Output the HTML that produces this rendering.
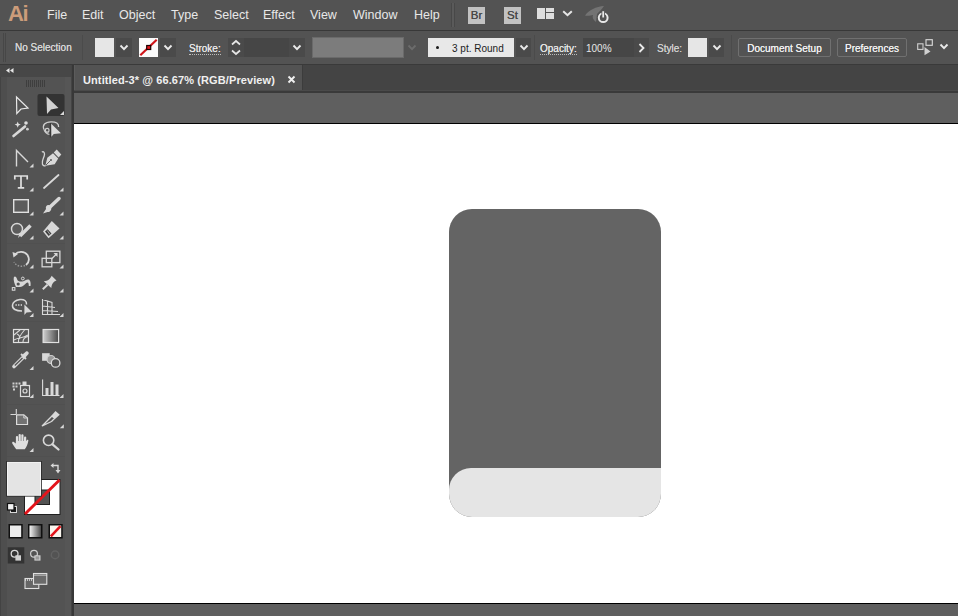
<!DOCTYPE html>
<html><head><meta charset="utf-8">
<style>
*{margin:0;padding:0;box-sizing:border-box}
html,body{width:958px;height:616px;overflow:hidden;background:#535353;font-family:"Liberation Sans",sans-serif;color:#e6e6e6}
.a{position:absolute}
.menu{font-size:12.5px;color:#e8e8e8;top:8px;white-space:nowrap}
.ctl{font-size:10px;color:#e6e6e6;white-space:nowrap}
.dd{background:#4a4a4a}
.b{text-shadow:0 0 0.4px currentColor}
.chev{position:absolute;left:50%;top:50%;width:6px;height:6px;border-right:1.6px solid #e0e0e0;border-bottom:1.6px solid #e0e0e0;transform:translate(-50%,-75%) rotate(45deg)}
.lbl{border-bottom:1px dotted #bdbdbd;line-height:11px}
.btn{border:1px solid #707070;border-radius:2px;background:#535353;font-size:10px;text-align:center;line-height:19px;color:#f0f0f0}
.tri{position:absolute;width:0;height:0;border-left:4px solid transparent;border-bottom:4px solid #d8d8d8}
</style></head><body>
<!-- MENU BAR -->
<div class="a" style="left:0;top:0;width:958px;height:30px;background:#535353"></div>
<div class="a" style="left:0;top:30px;width:958px;height:1px;background:#383838"></div>
<div class="a" style="left:8px;top:2px;font-size:22px;line-height:24px;color:#cc9c7a;font-weight:bold;letter-spacing:-1.5px">Ai</div>
<div class="a menu" style="left:47px">File</div>
<div class="a menu" style="left:82px">Edit</div>
<div class="a menu" style="left:119px">Object</div>
<div class="a menu" style="left:171px">Type</div>
<div class="a menu" style="left:214px">Select</div>
<div class="a menu" style="left:263px">Effect</div>
<div class="a menu" style="left:310px">View</div>
<div class="a menu" style="left:353px">Window</div>
<div class="a menu" style="left:414px">Help</div>
<div class="a" style="left:451px;top:3px;width:1px;height:24px;background:#484848"></div>
<div class="a" style="left:452px;top:3px;width:2px;height:24px;background:#5a5a5a"></div>
<div class="a" style="left:454px;top:3px;width:1px;height:24px;background:#484848"></div>
<div class="a" style="left:468px;top:7px;width:17px;height:17px;background:#c2c2c2;color:#484848;font-size:11.5px;text-align:center;line-height:17px;text-shadow:0 0 0.5px #484848">Br</div>
<div class="a" style="left:504px;top:7px;width:17px;height:17px;background:#c2c2c2;color:#484848;font-size:11.5px;text-align:center;line-height:17px;text-shadow:0 0 0.5px #484848">St</div>
<!-- workspace icon -->
<div class="a" style="left:537px;top:8px;width:8px;height:11px;background:#dedede"></div>
<div class="a" style="left:546px;top:8px;width:8px;height:4px;background:#dedede"></div>
<div class="a" style="left:546px;top:13px;width:8px;height:6px;background:#dedede"></div>
<svg class="a" style="left:562px;top:10px" width="11" height="7"><path d="M1.2 1.2 L5.5 5.2 L9.8 1.2" fill="none" stroke="#e6e6e6" stroke-width="2"/></svg>
<!-- sync icon -->
<svg class="a" style="left:584px;top:4px" width="26" height="22" viewBox="584 4 26 22">
<path d="M585 15.5 C589 10 596 6.5 604 6 C602 9 599 12 597 14 L596 22 C593 20 592 17 593 15 C591 15.5 588 16 585 15.5 Z" fill="#737373"/>
<circle cx="603.2" cy="17.7" r="4.4" fill="none" stroke="#e8e8e8" stroke-width="2"/>
<path d="M603.2 11 V17.5" stroke="#535353" stroke-width="3.5"/>
<path d="M603.2 11.2 V17.5" stroke="#e8e8e8" stroke-width="1.8"/>
</svg>

<!-- CONTROL BAR -->
<div class="a" style="left:0;top:31px;width:958px;height:33px;background:#535353"></div>
<div class="a" style="left:0;top:64px;width:958px;height:1px;background:#3a3a3a"></div>
<div class="a" style="left:3px;top:33px;width:1px;height:29px;background:#474747"></div>
<div class="a" style="left:5px;top:33px;width:1px;height:29px;background:#474747"></div>
<div class="a ctl b" style="left:15px;top:42px;color:#d6d6d6">No Selection</div>
<div class="a" style="left:534px;top:35px;width:1px;height:25px;background:#4b4b4b"></div>
<div class="a" style="left:731px;top:35px;width:1px;height:25px;background:#4b4b4b"></div>
<div class="a" style="left:82px;top:35px;width:1px;height:25px;background:#4b4b4b"></div>
<div class="a" style="left:95px;top:38px;width:19px;height:19px;background:#e6e6e6"></div>
<div class="a dd" style="left:116px;top:38px;width:16px;height:19px"></div>
<svg class="a" style="left:119px;top:44px" width="10" height="6.5" viewBox="-1 -1 10 6.5"><path d="M0.5 0.5 L4.0 4.2 L7.5 0.5" fill="none" stroke="#eaeaea" stroke-width="1.9"/></svg>
<div class="a" style="left:139px;top:38px;width:19px;height:19px;background:#fbfbfb"></div>
<svg class="a" style="left:139px;top:38px" width="19" height="19"><line x1="1.3" y1="17.3" x2="17.7" y2="1.8" stroke="#d0161b" stroke-width="2.2"/><rect x="7.7" y="7.5" width="4" height="4" fill="#e0141a" stroke="#1a0000" stroke-width="1.2"/></svg>
<div class="a dd" style="left:160px;top:38px;width:16px;height:19px"></div>
<svg class="a" style="left:162.5px;top:44px" width="10" height="6.5" viewBox="-1 -1 10 6.5"><path d="M0.5 0.5 L4.0 4.2 L7.5 0.5" fill="none" stroke="#eaeaea" stroke-width="1.9"/></svg>
<div class="a ctl lbl b" style="left:189px;top:43px">Stroke:</div>
<div class="a dd" style="left:228px;top:38px;width:16px;height:19px"></div>
<svg class="a" style="left:230px;top:39px" width="12" height="17"><path d="M2 5.5 L6 2 L10 5.5 M2 11.5 L6 15 L10 11.5" fill="none" stroke="#e6e6e6" stroke-width="1.7"/></svg>
<div class="a" style="left:244px;top:38px;width:45px;height:19px;background:#464646"></div>
<div class="a dd" style="left:289px;top:38px;width:16px;height:19px"></div>
<svg class="a" style="left:292px;top:44px" width="10" height="6.5" viewBox="-1 -1 10 6.5"><path d="M0.5 0.5 L4.0 4.2 L7.5 0.5" fill="none" stroke="#eaeaea" stroke-width="1.9"/></svg>
<div class="a" style="left:312px;top:37px;width:92px;height:21px;background:#7c7c7c;border:1px solid #6a6a6a"></div>
<svg class="a" style="left:407px;top:44px" width="10" height="6.5" viewBox="-1 -1 10 6.5"><path d="M0.5 0.5 L4.0 4.2 L7.5 0.5" fill="none" stroke="#6c6c6c" stroke-width="1.9"/></svg>
<div class="a" style="left:428px;top:38px;width:86px;height:19px;background:#e8e8e8"></div>
<div class="a" style="left:436px;top:46px;width:3px;height:3px;background:#1a1a1a;border-radius:50%"></div>
<div class="a ctl" style="left:452px;top:43px;color:#1c1c1c">3 pt. Round</div>
<div class="a dd" style="left:516px;top:38px;width:15px;height:19px"></div>
<svg class="a" style="left:518.5px;top:44px" width="10" height="6.5" viewBox="-1 -1 10 6.5"><path d="M0.5 0.5 L4.0 4.2 L7.5 0.5" fill="none" stroke="#eaeaea" stroke-width="1.9"/></svg>
<div class="a ctl lbl b" style="left:540px;top:43px">Opacity:</div>
<div class="a" style="left:583px;top:38px;width:51px;height:19px;background:#464646"></div>
<div class="a ctl" style="left:586px;top:43px">100%</div>
<div class="a dd" style="left:634px;top:38px;width:15px;height:19px"></div>
<svg class="a" style="left:638px;top:43px" width="7" height="10"><path d="M1.5 1 L5.5 5 L1.5 9" fill="none" stroke="#eaeaea" stroke-width="1.8"/></svg>
<div class="a ctl b" style="left:657px;top:43px;color:#cfcfcf">Style:</div>
<div class="a" style="left:688px;top:38px;width:19px;height:19px;background:#e6e6e6"></div>
<div class="a dd" style="left:709px;top:38px;width:15px;height:19px"></div>
<svg class="a" style="left:711.5px;top:44px" width="10" height="6.5" viewBox="-1 -1 10 6.5"><path d="M0.5 0.5 L4.0 4.2 L7.5 0.5" fill="none" stroke="#eaeaea" stroke-width="1.9"/></svg>
<div class="a btn b" style="left:738px;top:38px;width:93px;height:19px">Document Setup</div>
<div class="a btn b" style="left:837px;top:38px;width:70px;height:19px">Preferences</div>
<svg class="a" style="left:912px;top:36px" width="24" height="22" viewBox="912 36 24 22">
<rect x="926" y="39.7" width="6.3" height="5.6" fill="none" stroke="#dcdcdc" stroke-width="1.1"/>
<rect x="917.7" y="43.8" width="5.3" height="5.6" fill="none" stroke="#cfcfcf" stroke-width="1.1"/>
<path d="M924.5 47 L930.5 51.5 L924.5 55.2 Z" fill="#d0d0d0"/>
</svg>
<svg class="a" style="left:939px;top:43px" width="10" height="6.5" viewBox="-1 -1 10 6.5"><path d="M0.5 0.5 L4.0 4.2 L7.5 0.5" fill="none" stroke="#eaeaea" stroke-width="1.9"/></svg>

<!-- TOOLBAR -->
<div class="a" style="left:0;top:65px;width:72px;height:551px;background:#535353"></div>
<div class="a" style="left:0;top:65px;width:72px;height:12px;background:#474747"></div>
<div class="a" style="left:0;top:77px;width:7px;height:539px;background:#4e4e4e"></div>
<div class="a" style="left:0;top:77px;width:1px;height:539px;background:#434343"></div>
<div class="a" style="left:65px;top:77px;width:6px;height:539px;background:#565656"></div>
<div class="a" style="left:71px;top:65px;width:1px;height:551px;background:#444"></div>
<div class="a" style="left:72px;top:65px;width:2px;height:551px;background:#383838"></div>
<svg class="a" style="left:0;top:64px" width="72" height="552" viewBox="0 64 72 552">
<g fill="#e6e6e6">
<!-- collapse arrows -->
<path d="M6 70.5 L9.5 68 V73 Z M10 70.5 L13.5 68 V73 Z"/>
</g>
<!-- grip -->
<g stroke="#3e3e3e" stroke-width="1">
<path d="M26.5 80V87M28.5 80V87M30.5 80V87M32.5 80V87M34.5 80V87M36.5 80V87M38.5 80V87M40.5 80V87M42.5 80V87M44.5 80V87"/>
</g>
<!-- selected bg -->
<rect x="37.5" y="94" width="27" height="22" rx="2" fill="#333333"/>
<!-- selection -->
<path d="M16.5 97 L28 108 L21 109 L16.8 113.5 Z" fill="none" stroke="#e8e8e8" stroke-width="1.2" stroke-linejoin="miter"/>
<!-- direct selection -->
<path d="M46.5 96.5 L58.5 108 L51 109.5 L47 114 Z" fill="#d2d2d2"/>
<path d="M64 111 V115 H60 Z" fill="#d8d8d8"/>
<!-- magic wand -->
<path d="M13.5 136 L25 126.5" stroke="#d8d8d8" stroke-width="2.6" stroke-linecap="round"/>
<path d="M17.7 121.5 L18.6 123.7 L20.8 124.6 L18.6 125.5 L17.7 127.7 L16.8 125.5 L14.6 124.6 L16.8 123.7 Z" fill="#dcdcdc"/>
<circle cx="26" cy="123" r="1.8" fill="#dcdcdc"/>
<circle cx="27.4" cy="129.2" r="1.4" fill="#cfcfcf"/>
<!-- lasso -->
<path d="M44 129.5 C42 125 45 122 51 121.8 C56 121.6 59 123.5 58.6 127" fill="none" stroke="#d0d0d0" stroke-width="1.3"/>
<path d="M44 129.5 C45 132.5 47.5 134 49.5 134.5" fill="none" stroke="#c8c8c8" stroke-width="1.2"/>
<circle cx="47.2" cy="130.3" r="1.9" fill="none" stroke="#d0d0d0" stroke-width="1.3"/>
<path d="M50.3 123 V137.5" stroke="#333" stroke-width="1"/>
<path d="M51.2 123.8 L61 133.2 L53.8 134 L51.4 136.8 Z" fill="#dadada"/>
<!-- anchor/curvature left row3 -->
<path d="M16.5 166.5 V150.5 L28 162" fill="none" stroke="#d8d8d8" stroke-width="1.4"/>
<path d="M33.5 163.5 V167.5 H29.5 Z" fill="#d8d8d8"/>
<!-- pen -->
<path d="M41.8 152 C43.8 151 45.2 153 44.2 156 C43.2 158.8 41.6 161.5 42.4 164 C42.9 165.5 44.3 166.2 45.5 165.6" fill="none" stroke="#d4d4d4" stroke-width="1.3"/>
<path d="M45.3 165.8 L47.3 157.8 L53 153.3 L58.2 158.5 L54.7 164.2 Z" fill="#d8d8d8"/>
<path d="M53.8 152.6 L56.7 149.6 L61.3 154.5 L58.6 157.6 Z" fill="#d8d8d8"/>
<path d="M46 165 L50.5 160.5" stroke="#535353" stroke-width="0.9"/>
<circle cx="51" cy="160" r="0.9" fill="#535353"/>
<!-- type -->
<path d="M14.8 179.5 V176 H27.2 V179.5 M21 176 V187.8 M17.8 187.8 H24.2" fill="none" stroke="#e0e0e0" stroke-width="1.7"/>
<path d="M33.5 187.5 V191.5 H29.5 Z" fill="#d8d8d8"/>
<!-- line -->
<path d="M44 188 L58.5 175" stroke="#d8d8d8" stroke-width="1.8" stroke-linecap="round"/>
<path d="M63.5 187.5 V191.5 H59.5 Z" fill="#d8d8d8"/>
<!-- rectangle -->
<rect x="13.7" y="199.7" width="14.6" height="12.6" fill="#5c5c5c" stroke="#e0e0e0" stroke-width="1.4"/>
<path d="M33.5 211.5 V215.5 H29.5 Z" fill="#d8d8d8"/>
<!-- paintbrush -->
<path d="M59 198.5 L50 207" stroke="#d8d8d8" stroke-width="3.5" stroke-linecap="round"/>
<path d="M50.5 206 C48 203.5 45 206 46 209 L43 213.5 L47.5 212 C50.5 212.5 52.5 209 50.5 206 Z" fill="#d8d8d8"/>
<path d="M63.5 211.5 V215.5 H59.5 Z" fill="#d8d8d8"/>
<!-- shaper / blob -->
<circle cx="17" cy="229" r="5.5" fill="#5c5c5c" stroke="#d8d8d8" stroke-width="1.4"/>
<path d="M30.5 225.5 L20 236" stroke="#d8d8d8" stroke-width="3.4" stroke-linecap="butt"/>
<path d="M21.5 234.5 L18 238 L19.5 233 Z" fill="#d8d8d8"/>
<path d="M33.5 235.5 V239.5 H29.5 Z" fill="#d8d8d8"/>
<!-- eraser -->
<path d="M51.8 221 L59.5 228.6 L48.5 238.3 L43 231.6 Z" fill="#d8d8d8"/>
<path d="M45 231.6 L47.6 229.3 L51.5 233.6 L48.7 236 Z" fill="#3e3e3e"/><path d="M47.2 230.5 L50 234.5" stroke="#bdbdbd" stroke-width="0.8"/>
<path d="M63.5 235.5 V239.5 H59.5 Z" fill="#d8d8d8"/>
<!-- separator -->
<rect x="7" y="243" width="58" height="1" fill="#505050"/>
<!-- rotate -->
<path d="M15 254.5 C18 251 24.5 251 27.5 255 C29.5 258.5 29 262.5 26 265" fill="none" stroke="#d8d8d8" stroke-width="1.8"/>
<path d="M25 265.5 C21.5 267 16.5 266.5 14 262" fill="none" stroke="#9a9a9a" stroke-width="1.4" stroke-dasharray="1.5 1.5"/>
<path d="M12.5 252 L18 254 L13.5 257.5 Z" fill="#d8d8d8"/>
<path d="M33.5 264.5 V268.5 H29.5 Z" fill="#d8d8d8"/>
<!-- scale -->
<rect x="46.3" y="251.2" width="13.6" height="11.4" fill="none" stroke="#d8d8d8" stroke-width="1.3"/>
<rect x="42.1" y="258.3" width="9.7" height="8.5" fill="none" stroke="#d8d8d8" stroke-width="1.3"/>
<path d="M51.5 259 L57 253.5" stroke="#d8d8d8" stroke-width="1.3"/>
<path d="M57.5 253 L57.5 257 L53.5 253 Z" fill="#d8d8d8"/>
<path d="M63.5 264.5 V268.5 H59.5 Z" fill="#d8d8d8"/>
<!-- width tool -->
<path d="M13.8 277.5 C14.5 275.5 16.5 276.5 17 279 C17.5 281.5 20 281.8 22.5 281.5 C25 281 26.5 279 28.5 279.5 C30.5 280 31 283.5 30.5 286 L28.8 286 C28.8 284 28.5 282.5 27.5 282.5 C25.5 283 24 286.5 20 287 L16 287 C14.5 284 13.2 280 13.8 277.5 Z" fill="#d8d8d8"/>
<circle cx="18.2" cy="284" r="1.6" fill="#535353"/>
<circle cx="22.8" cy="278.5" r="1.4" fill="none" stroke="#dcdcdc" stroke-width="1"/>
<rect x="12.3" y="287.6" width="2.6" height="2.6" fill="none" stroke="#e0e0e0" stroke-width="1"/>
<path d="M33.5 288.5 V292.5 H29.5 Z" fill="#d8d8d8"/>
<!-- puppet warp / pin -->
<path d="M42.8 289.2 L47.5 284.8" stroke="#d8d8d8" stroke-width="2"/>
<path d="M43.8 281.2 C46 281.2 47.5 280.5 49 279.5 C50 278.5 51 277.5 51.6 275.8 L56.5 280.6 C54.8 281.3 53.8 282 53 283 C52 284.3 51.5 286 51.3 287.9 Z" fill="#d8d8d8"/>
<path d="M63.5 288.5 V292.5 H59.5 Z" fill="#d8d8d8"/>
<!-- shape builder -->
<path d="M22 311 C16 311 12 309 12.5 305 C13 301 17 300 20 299.5 C24 299 27 301 26.5 304.5" fill="none" stroke="#d8d8d8" stroke-width="1.5"/>
<path d="M15.5 305 H22" stroke="#e0e0e0" stroke-width="1.3" stroke-dasharray="1.3 1.3"/>
<path d="M24.4 304.5 L32 312 L26.5 312.5 L24.4 315 Z" fill="#d8d8d8"/>
<path d="M33.5 313 V317 H29.5 Z" fill="#d8d8d8"/>
<!-- perspective grid -->
<path d="M42.5 299 V314.5 H60 M42.5 299.5 L52 302.5 V314 M47.5 300.5 V314 M42.5 306 L55 307.5 M42.5 310.5 L58 311.5" fill="none" stroke="#d8d8d8" stroke-width="1.1"/>
<path d="M63.5 313 V317 H59.5 Z" fill="#d8d8d8"/>
<!-- separator -->
<rect x="7" y="321" width="58" height="1" fill="#505050"/>
<!-- mesh -->
<rect x="13.5" y="329.5" width="15" height="13" fill="#5a5a5a" stroke="#e0e0e0" stroke-width="1.2"/>
<path d="M14 335 C17 332 19 331 20 330 M14 340 C18 337 22 339 28 335 M18.5 342 C18 338 21 334 24.5 330 M23 342 C23 339 25.5 337 28 336.5 M17 334 C19 335 20 337 19.5 339" fill="none" stroke="#d8d8d8" stroke-width="1.1"/>
<!-- gradient -->
<defs><linearGradient id="gr" x1="0" x2="1"><stop offset="0" stop-color="#d0d0d0"/><stop offset="1" stop-color="#484848"/></linearGradient>
<linearGradient id="gr2" x1="0" x2="1"><stop offset="0" stop-color="#f4f4f4"/><stop offset="1" stop-color="#4a4a4a"/></linearGradient></defs>
<rect x="43.1" y="329.5" width="15.5" height="13" fill="url(#gr)" stroke="#e0e0e0" stroke-width="1.2"/>
<!-- eyedropper -->
<path d="M14 366.5 L23.5 357" stroke="#d8d8d8" stroke-width="3.6" stroke-linecap="round"/>
<path d="M14.8 365.5 L22.5 358" stroke="#535353" stroke-width="1.3"/>
<path d="M22 355 L26 351.5 C27.5 350.5 29.5 352.5 28.5 354 L25 358 Z" fill="#d8d8d8"/>
<path d="M21 354 L26 359" stroke="#d8d8d8" stroke-width="1.8"/>
<path d="M33.5 366 V370 H29.5 Z" fill="#d8d8d8"/>
<!-- blend -->
<rect x="42.1" y="353.2" width="7.6" height="7.6" fill="#d8d8d8"/>
<circle cx="51" cy="359.5" r="4" fill="#9a9a9a" stroke="#cfcfcf" stroke-width="1.2"/>
<circle cx="55.6" cy="362.9" r="4.3" fill="#535353" stroke="#dadada" stroke-width="1.3"/>
<!-- symbol sprayer -->
<g fill="#cfcfcf"><rect x="12.5" y="382.5" width="2" height="2"/><rect x="15.5" y="382.5" width="2" height="2"/><rect x="18.5" y="382.5" width="2" height="2"/><rect x="12.5" y="385.5" width="2" height="2"/><rect x="15.5" y="385.5" width="2" height="2"/><rect x="13" y="388.5" width="2" height="2"/></g>
<rect x="20.5" y="385.5" width="9" height="11" fill="#535353" stroke="#dcdcdc" stroke-width="1.2"/>
<rect x="22.5" y="381.5" width="4" height="4" fill="#d8d8d8"/>
<circle cx="25" cy="391" r="2" fill="none" stroke="#d8d8d8" stroke-width="1.2"/>
<path d="M33.5 394 V398 H29.5 Z" fill="#d8d8d8"/>
<!-- column graph -->
<path d="M42.6 379.5 V395.5 H59.5" fill="none" stroke="#dcdcdc" stroke-width="1.1"/>
<rect x="45.5" y="388" width="3" height="7" fill="#d8d8d8"/>
<rect x="50.5" y="382" width="3" height="13" fill="#d8d8d8"/>
<rect x="55.5" y="384.5" width="3" height="10.5" fill="#d8d8d8"/>
<path d="M63.5 394 V398 H59.5 Z" fill="#d8d8d8"/>
<!-- separator -->
<rect x="7" y="404" width="58" height="1" fill="#505050"/>
<!-- artboard -->
<path d="M16.3 409 V414 M10.5 414.5 H16" stroke="#d8d8d8" stroke-width="1.1"/>
<path d="M16.6 414.8 H23.8 L27.5 418 V424.5 H16.6 Z" fill="#727272" stroke="#dcdcdc" stroke-width="1.2"/>
<path d="M23.8 414.8 V418 H27.5" fill="none" stroke="#cfcfcf" stroke-width="1"/>
<!-- slice -->
<path d="M42.3 425.8 L49 419 L52 416 L54.5 418.5 L51.5 421.5 Z" fill="none" stroke="#d8d8d8" stroke-width="1.3" stroke-linejoin="round"/>
<path d="M51.5 415.5 L55.5 411 L59.8 414.8 L55 419 Z" fill="#d8d8d8"/>
<path d="M63.8 424.3 V428.3 H59.8 Z" fill="#d8d8d8"/>
<!-- hand -->
<g fill="#e0e0e0">
<rect x="15.9" y="436" width="2.2" height="8" rx="1.1"/>
<rect x="18.6" y="434" width="2.2" height="9" rx="1.1"/>
<rect x="21.3" y="434.3" width="2.2" height="9" rx="1.1"/>
<rect x="24" y="436.5" width="2.2" height="8" rx="1.1"/>
<path d="M15.9 441 H26.2 L27 440 C27.6 439.4 28.6 439.8 28.3 441 C27.8 444 26.5 447 24.8 449.3 H16.2 C15 447.5 13.5 445.5 12.3 443.5 C11.8 442.3 12.8 441.5 13.8 442 L15.9 443.5 Z"/>
</g>
<path d="M33.5 448 V452 H29.5 Z" fill="#d8d8d8"/>
<!-- zoom -->
<circle cx="48.6" cy="440.3" r="5.2" fill="none" stroke="#d8d8d8" stroke-width="1.6"/>
<path d="M52.5 444.3 L58.5 449.5" stroke="#d8d8d8" stroke-width="2.3" stroke-linecap="round"/>
<!-- separator -->
<rect x="7" y="456" width="58" height="1" fill="#505050"/>
<!-- swap arrows -->
<path d="M52 465.5 H58 V470.5" fill="none" stroke="#d8d8d8" stroke-width="1.4"/>
<path d="M50.5 465.5 L53.5 463 V468 Z M58 473.5 L55.5 470 H60.5 Z" fill="#d8d8d8"/>
<!-- stroke swatch -->
<rect x="24" y="479" width="36.5" height="36" fill="#202020"/>
<rect x="25" y="480" width="34.5" height="34" fill="#ffffff"/>
<rect x="34.5" y="489.5" width="15.5" height="15.5" fill="#202020"/>
<rect x="35.5" y="490.5" width="13.5" height="13.5" fill="#535353"/>
<path d="M25 514 L59.5 480" stroke="#e3141b" stroke-width="2.9"/>
<!-- fill swatch -->
<rect x="6.2" y="461" width="35.6" height="35.6" fill="#282828"/>
<rect x="7" y="461.8" width="34" height="34" fill="#f4f4f4"/>
<rect x="8" y="462.8" width="32" height="32" fill="#e4e4e4"/>
<!-- default -->
<rect x="10.5" y="506.5" width="6" height="6" fill="#1a1a1a" stroke="#d8d8d8" stroke-width="1"/>
<rect x="7.5" y="503.5" width="6.5" height="6.5" fill="#f4f4f4" stroke="#111" stroke-width="1.2"/>
<!-- color modes -->
<rect x="8.5" y="524" width="14.2" height="14.5" fill="#101010"/>
<rect x="10" y="525.5" width="11.2" height="11.5" fill="#ececec"/>
<rect x="28" y="524" width="14.5" height="14.5" fill="#101010"/>
<rect x="29.5" y="525.5" width="11.5" height="11.5" fill="url(#gr2)"/>
<rect x="48.5" y="524" width="14.2" height="14.5" fill="#101010"/>
<rect x="50" y="525.5" width="11.2" height="11.5" fill="#fbf6ef"/>
<path d="M50.8 536.3 L60.5 526.2" stroke="#e3141b" stroke-width="2.6"/>
<!-- draw modes -->
<rect x="7.7" y="547.3" width="16.6" height="16.2" fill="#333333"/>
<circle cx="14.6" cy="553.7" r="3.4" fill="none" stroke="#d8d8d8" stroke-width="1.3"/>
<rect x="15.4" y="555.3" width="5.6" height="5.3" fill="#d0d0d0"/>
<circle cx="34" cy="553.7" r="3.4" fill="none" stroke="#cfcfcf" stroke-width="1.2"/>
<rect x="34.4" y="555.3" width="6.1" height="5.3" fill="#cfcfcf"/>
<rect x="35.5" y="556.3" width="3.8" height="3.3" fill="#9a9a9a"/>
<circle cx="55.1" cy="554.9" r="3.8" fill="none" stroke="#626262" stroke-width="1.5"/>
<!-- screen mode -->
<rect x="25" y="578.5" width="13.8" height="10" fill="#666" stroke="#e0e0e0" stroke-width="1.1"/>
<path d="M25 580 H38.8" stroke="#e0e0e0" stroke-width="1.5" stroke-dasharray="1 1"/>
<rect x="33.5" y="573.5" width="13.3" height="10.8" fill="#6a6a6a" stroke="#e0e0e0" stroke-width="1.1"/>
<path d="M33.5 575.3 H46.8" stroke="#e0e0e0" stroke-width="1.5" stroke-dasharray="1 1"/>
</svg>

<!-- TAB STRIP -->
<div class="a" style="left:74px;top:65px;width:884px;height:28px;background:#444444"></div>
<div class="a" style="left:74px;top:65px;width:228px;height:26px;background:#535353"></div>
<div class="a" style="left:74px;top:65px;width:1px;height:27px;background:#5c5c5c"></div>
<div class="a" style="left:302px;top:65px;width:1px;height:27px;background:#3c3c3c"></div>
<div class="a" style="left:74px;top:90px;width:884px;height:1px;background:#4a4a4a"></div>
<div class="a" style="left:74px;top:91px;width:884px;height:3px;background:#3a3a3a"></div>
<div class="a" style="left:83px;top:74px;font-size:11px;line-height:13px;font-weight:bold;color:#f0f0f0;white-space:nowrap;letter-spacing:0.1px">Untitled-3* @ 66.67% (RGB/Preview)</div>
<svg class="a" style="left:287px;top:75px" width="9" height="9"><path d="M1.5 1.5 L7.5 7.5 M7.5 1.5 L1.5 7.5" stroke="#f0f0f0" stroke-width="1.9"/></svg>

<!-- CANVAS -->
<div class="a" style="left:74px;top:93px;width:884px;height:523px;background:#5f5f5f"></div>
<div class="a" style="left:74px;top:123px;width:884px;height:481px;background:#000"></div>
<div class="a" style="left:74px;top:124px;width:884px;height:479px;background:#fff"></div>
<svg class="a" style="left:449px;top:209px" width="212" height="308" viewBox="0 0 212 308">
<defs><clipPath id="cp"><rect x="0" y="0" width="212" height="308" rx="23" ry="23"/></clipPath></defs>
<g clip-path="url(#cp)">
<rect x="0" y="0" width="212" height="308" fill="#646464"/>
<path d="M22 259 H212 V308 H0 V281 A22 22 0 0 1 22 259 Z" fill="#e5e5e5"/>
</g>
</svg>
</body></html>
